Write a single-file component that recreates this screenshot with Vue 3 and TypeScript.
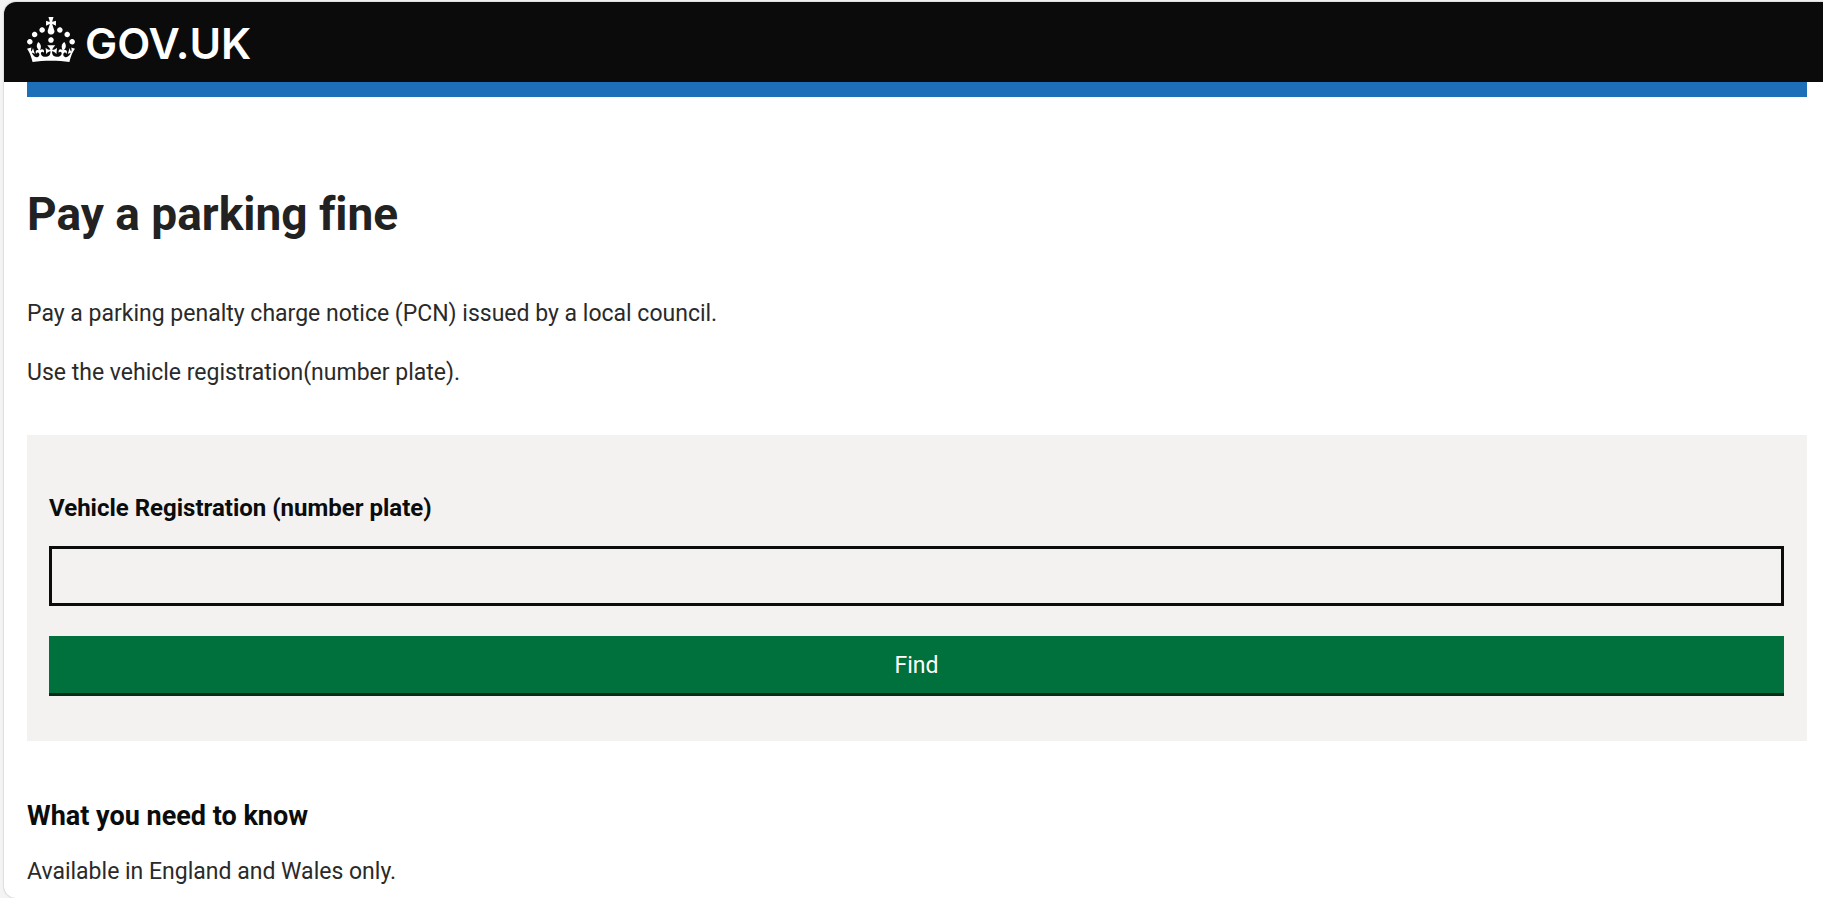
<script setup lang="ts">
import { ref } from 'vue'

const registration = ref('')
</script>

<template>
  <div class="frame">
    <header class="header">
      <a class="logo" href="#" aria-label="GOV.UK">
        <svg class="crown" viewBox="0 0 32 30" aria-hidden="true">
          <path
            fill="currentColor"
            fill-rule="evenodd"
            d="M22.6 10.4c-1 .4-2-.1-2.4-1-.4-.9.1-2 1-2.4.9-.4 2 .1 2.4 1s-.1 2-1 2.4m-5.9 6.7c-.9.4-2-.1-2.4-1-.4-.9.1-2 1-2.4.9-.4 2 .1 2.4 1s-.1 2-1 2.4m10.8-3.7c-1 .4-2-.1-2.4-1-.4-.9.1-2 1-2.4.9-.4 2 .1 2.4 1s0 2-1 2.4m3.3 4.8c-1 .4-2-.1-2.4-1-.4-.9.1-2 1-2.4.9-.4 2 .1 2.4 1s-.1 2-1 2.4M17 4.7l2.3 1.2V2.5l-2.3.7-.2-.2.9-3h-3.4l.9 3-.2.2c-.1.1-2.3-.7-2.3-.7v3.4L15 4.7c.1.1.1.2.2.2l-1.3 4c-.1.2-.1.4-.1.6 0 1.1.8 2 1.9 2.2h.7c1-.2 1.9-1.1 1.9-2.1 0-.2 0-.4-.1-.6l-1.3-4c-.1-.2 0-.2.1-.3m-7.6 5.7c.9.4 2-.1 2.4-1 .4-.9-.1-2-1-2.4-.9-.4-2 .1-2.4 1s0 2 1 2.4m-5 3c.9.4 2-.1 2.4-1 .4-.9-.1-2-1-2.4-.9-.4-2 .1-2.4 1s.1 2 1 2.4m-3.2 4.8c.9.4 2-.1 2.4-1 .4-.9-.1-2-1-2.4-.9-.4-2 .1-2.4 1s0 2 1 2.4m14.8 11c4.4 0 8.6.3 12.3.8 1.1-4.5 2.4-7 3.7-8.8l-2.5-.9c.2 1.3.3 1.9 0 2.7-.4-.4-.8-1.1-1.1-2.3l-1.2 4c.7-.5 1.3-.8 2-.9-1.1 2.5-2.6 3.1-3.5 3-1.1-.2-1.7-1.2-1.5-2.1.3-1.2 1.5-1.5 2.1-.1 1.1-2.3-.8-3-2-2.3 1.9-1.9 2.1-3.5.6-5.6-2.1 1.6-2.1 3.2-1.2 5.5-1.2-1.4-3.2-.6-2.5 1.6.9-1.4 2.1-.5 1.9.8-.2 1.1-1.7 2.1-3.5 1.9-2.7-.2-2.9-2.1-2.9-3.6.7-.1 1.9.5 2.9 1.9l.4-4.3c-1.1 1.1-2.1 1.4-3.2 1.4.4-1.2 2.1-3 2.1-3h-5.4s1.7 1.9 2.1 3c-1.1 0-2.1-.2-3.2-1.4l.4 4.3c1-1.4 2.2-2 2.9-1.9-.1 1.5-.2 3.4-2.9 3.6-1.9.2-3.4-.8-3.5-1.9-.2-1.3 1-2.2 1.9-.8.7-2.3-1.2-3-2.5-1.6.9-2.2.9-3.9-1.2-5.5-1.5 2-1.3 3.7.6 5.6-1.2-.7-3.1 0-2 2.3.6-1.4 1.8-1.1 2.1.1.2.9-.3 1.9-1.5 2.1-.9.2-2.4-.5-3.5-3 .6 0 1.2.3 2 .9l-1.2-4c-.3 1.1-.7 1.9-1.1 2.3-.3-.8-.2-1.4 0-2.7l-2.9.9C1.3 23 2.6 25.5 3.7 30c3.7-.5 7.9-.8 12.3-.8"
          />
        </svg>
        <span class="wordmark">GOV.UK</span>
      </a>
    </header>

    <main class="content">
      <div class="accent"></div>
      <h1 class="title">Pay a parking fine</h1>
      <div class="intro">
        <p>Pay a parking penalty charge notice (PCN) issued by a local council.</p>
        <p>Use the vehicle registration(number plate).</p>
      </div>

      <form class="panel" @submit.prevent>
        <label class="label" for="registration">Vehicle Registration (number plate)</label>
        <input id="registration" v-model="registration" class="input" type="text" autocomplete="off" />
        <button class="button" type="submit">Find</button>
      </form>

      <section class="notes">
        <h2 class="subtitle">What you need to know</h2>
        <p>Available in England and Wales only.</p>
      </section>
    </main>
  </div>
</template>

<style>
body {
  margin: 0;
  background: #f4f4f5;
}
</style>

<style scoped>
.frame {
  box-sizing: border-box;
  min-height: calc(100vh - 2px);
  margin: 2px 0 0 4px;
  overflow: hidden;
  border-radius: 12px 0 0 12px;
  background: #fff;
  box-shadow: 0 0 2px rgba(0, 0, 0, 0.3);
  color: #0b0c0c;
  font-family: Roboto, "Liberation Sans", sans-serif;
  font-size: 23px;
  font-variant-ligatures: none;
  line-height: 29px;
}

.header {
  display: flex;
  padding: 15px 16px 20px 23px;
  background: #0b0b0b;
}

.logo {
  display: flex;
  align-items: flex-start;
  gap: 10px;
  height: 45px;
  color: #fff;
  text-decoration: none;
}

.crown {
  width: 48px;
  height: 45px;
}

.wordmark {
  padding-top: 3px;
  font-family: Inter, "Liberation Sans", sans-serif;
  font-size: 43px;
  font-weight: 600;
  line-height: 46px;
}

.content {
  padding: 0 16px 12px 23px;
}

.accent {
  height: 15px;
  background: #1d70b8;
}

.title {
  margin: 89px 0 57px;
  color: #222;
  font-size: 46px;
  font-weight: 700;
  line-height: 56px;
}

p {
  margin: 0;
  color: #2a2a2a;
}

.intro {
  display: flex;
  flex-direction: column;
  gap: 30px;
}

.panel {
  display: flex;
  flex-direction: column;
  margin: 48px 0 59px;
  padding: 59px 23px 45px 22px;
  background: #f3f2f1;
}

.label {
  margin-bottom: 23px;
  font-size: 24px;
  font-weight: 700;
}

.input {
  box-sizing: border-box;
  width: 100%;
  height: 60px;
  margin: 0 0 30px;
  padding: 0 12px;
  border: 3px solid #0b0c0c;
  border-radius: 0;
  background: transparent;
  color: inherit;
  font: inherit;
}

.button {
  height: 60px;
  padding: 2px 12px 0;
  border: 0;
  border-bottom: 3px solid #002d18;
  border-radius: 0;
  background: #00703c;
  color: #fff;
  font: inherit;
  cursor: pointer;
}

.subtitle {
  margin: 0 0 24px;
  font-size: 27px;
  font-weight: 700;
  line-height: 33px;
}
</style>
